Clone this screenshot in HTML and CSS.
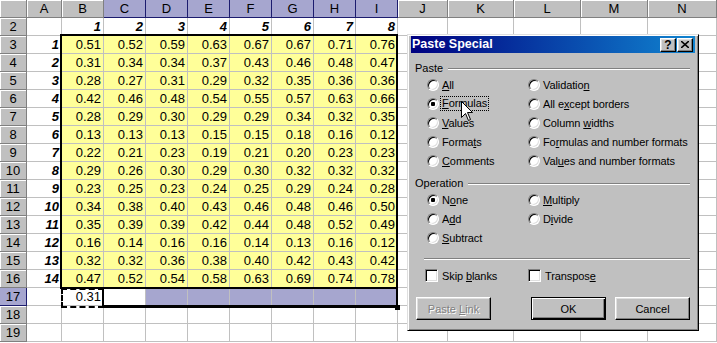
FILE: index.html
```html
<!DOCTYPE html>
<html>
<head>
<meta charset="utf-8">
<link rel="stylesheet" href="styles.css">
</head>
<body>
<div class="sheet">
  <div class="r hd"><span class="h"></span><span class="h">A</span><span class="h">B</span><span class="h s">C</span><span class="h s">D</span><span class="h s">E</span><span class="h s">F</span><span class="h s">G</span><span class="h s">H</span><span class="h s">I</span><span class="h">J</span><span class="h">K</span><span class="h">L</span><span class="h">M</span><span class="h">N</span></div>
  <div class="r"><span class="h">2</span><span></span><span class="bi">1</span><span class="bi">2</span><span class="bi">3</span><span class="bi">4</span><span class="bi">5</span><span class="bi">6</span><span class="bi">7</span><span class="bi">8</span><span></span><span></span><span></span><span></span><span></span></div>
  <div class="r y"><span class="h">3</span><span class="bi">1</span><span>0.51</span><span>0.52</span><span>0.59</span><span>0.63</span><span>0.67</span><span>0.67</span><span>0.71</span><span>0.76</span><span></span><span></span><span></span><span></span><span></span></div>
  <div class="r y"><span class="h">4</span><span class="bi">2</span><span>0.31</span><span>0.34</span><span>0.34</span><span>0.37</span><span>0.43</span><span>0.46</span><span>0.48</span><span>0.47</span><span></span><span></span><span></span><span></span><span></span></div>
  <div class="r y"><span class="h">5</span><span class="bi">3</span><span>0.28</span><span>0.27</span><span>0.31</span><span>0.29</span><span>0.32</span><span>0.35</span><span>0.36</span><span>0.36</span><span></span><span></span><span></span><span></span><span></span></div>
  <div class="r y"><span class="h">6</span><span class="bi">4</span><span>0.42</span><span>0.46</span><span>0.48</span><span>0.54</span><span>0.55</span><span>0.57</span><span>0.63</span><span>0.66</span><span></span><span></span><span></span><span></span><span></span></div>
  <div class="r y"><span class="h">7</span><span class="bi">5</span><span>0.28</span><span>0.29</span><span>0.30</span><span>0.29</span><span>0.29</span><span>0.34</span><span>0.32</span><span>0.35</span><span></span><span></span><span></span><span></span><span></span></div>
  <div class="r y"><span class="h">8</span><span class="bi">6</span><span>0.13</span><span>0.13</span><span>0.13</span><span>0.15</span><span>0.15</span><span>0.18</span><span>0.16</span><span>0.12</span><span></span><span></span><span></span><span></span><span></span></div>
  <div class="r y"><span class="h">9</span><span class="bi">7</span><span>0.22</span><span>0.21</span><span>0.23</span><span>0.19</span><span>0.21</span><span>0.20</span><span>0.23</span><span>0.23</span><span></span><span></span><span></span><span></span><span></span></div>
  <div class="r y"><span class="h">10</span><span class="bi">8</span><span>0.29</span><span>0.26</span><span>0.30</span><span>0.29</span><span>0.30</span><span>0.32</span><span>0.32</span><span>0.32</span><span></span><span></span><span></span><span></span><span></span></div>
  <div class="r y"><span class="h">11</span><span class="bi">9</span><span>0.23</span><span>0.25</span><span>0.23</span><span>0.24</span><span>0.25</span><span>0.29</span><span>0.24</span><span>0.28</span><span></span><span></span><span></span><span></span><span></span></div>
  <div class="r y"><span class="h">12</span><span class="bi">10</span><span>0.34</span><span>0.38</span><span>0.40</span><span>0.43</span><span>0.46</span><span>0.48</span><span>0.46</span><span>0.50</span><span></span><span></span><span></span><span></span><span></span></div>
  <div class="r y"><span class="h">13</span><span class="bi">11</span><span>0.35</span><span>0.39</span><span>0.39</span><span>0.42</span><span>0.44</span><span>0.48</span><span>0.52</span><span>0.49</span><span></span><span></span><span></span><span></span><span></span></div>
  <div class="r y"><span class="h">14</span><span class="bi">12</span><span>0.16</span><span>0.14</span><span>0.16</span><span>0.16</span><span>0.14</span><span>0.13</span><span>0.16</span><span>0.12</span><span></span><span></span><span></span><span></span><span></span></div>
  <div class="r y"><span class="h">15</span><span class="bi">13</span><span>0.32</span><span>0.32</span><span>0.36</span><span>0.38</span><span>0.40</span><span>0.42</span><span>0.43</span><span>0.42</span><span></span><span></span><span></span><span></span><span></span></div>
  <div class="r y"><span class="h">16</span><span class="bi">14</span><span>0.47</span><span>0.52</span><span>0.54</span><span>0.58</span><span>0.63</span><span>0.69</span><span>0.74</span><span>0.78</span><span></span><span></span><span></span><span></span><span></span></div>
  <div class="r"><span class="h s">17</span><span></span><span>0.31</span><span></span><span class="lv"></span><span class="lv"></span><span class="lv"></span><span class="lv"></span><span class="lv"></span><span class="lv"></span><span></span><span></span><span></span><span></span><span></span></div>
  <div class="r"><span class="h">18</span><span></span><span></span><span></span><span></span><span></span><span></span><span></span><span></span><span></span><span></span><span></span><span></span><span></span><span></span></div>
  <div class="r"><span class="h">19</span><span></span><span></span><span></span><span></span><span></span><span></span><span></span><span></span><span></span><span></span><span></span><span></span><span></span><span></span></div>

  <div class="block"></div>
  <div class="ants"></div>
  <div class="selbox"></div>
  <div class="handle"></div>
</div>

<div class="dlg">
  <div class="title">
    <span class="ttext">Paste Special</span>
    <div class="tbtns">
      <span class="tb q">?</span>
      <span class="tb"><svg width="8" height="7" viewBox="0 0 8 7"><path d="M0 0 L8 7 M8 0 L0 7" stroke="#000" stroke-width="1.6" fill="none"/></svg></span>
    </div>
  </div>
  <div class="body">
    <div class="grp"><span>Paste</span><i class="line"></i></div>
    <div class="opts">
      <label class="op"><i class="rd"></i><span><u>A</u>ll</span></label>
      <label class="op"><i class="rd"></i><span>Validatio<u>n</u></span></label>
      <label class="op"><i class="rd on"></i><span class="focus"><u>F</u>ormulas</span></label>
      <label class="op"><i class="rd"></i><span>All e<u>x</u>cept borders</span></label>
      <label class="op"><i class="rd"></i><span><u>V</u>alues</span></label>
      <label class="op"><i class="rd"></i><span>Column <u>w</u>idths</span></label>
      <label class="op"><i class="rd"></i><span>Forma<u>t</u>s</span></label>
      <label class="op"><i class="rd"></i><span>Fo<u>r</u>mulas and number formats</span></label>
      <label class="op"><i class="rd"></i><span><u>C</u>omments</span></label>
      <label class="op"><i class="rd"></i><span>Val<u>u</u>es and number formats</span></label>
    </div>
    <div class="grp g2"><span>Operation</span><i class="line"></i></div>
    <div class="opts">
      <label class="op"><i class="rd on"></i><span>N<u>o</u>ne</span></label>
      <label class="op"><i class="rd"></i><span><u>M</u>ultiply</span></label>
      <label class="op"><i class="rd"></i><span>A<u>d</u>d</span></label>
      <label class="op"><i class="rd"></i><span>D<u>i</u>vide</span></label>
      <label class="op"><i class="rd"></i><span><u>S</u>ubtract</span></label>
    </div>
    <i class="sep"></i>
    <div class="checks">
      <label class="ck"><i class="cb"></i><span>Skip <u>b</u>lanks</span></label>
      <label class="ck"><i class="cb"></i><span>Transpos<u>e</u></span></label>
    </div>
    <div class="btns">
      <span class="btn dis"><span>Paste <u>L</u>ink</span></span>
      <span class="btn def"><span>OK</span></span>
      <span class="btn"><span>Cancel</span></span>
    </div>
  </div>
</div>

<svg class="cursor" width="13" height="20" viewBox="0 0 13 20"><path d="M0.5 0.5 V16.5 L4.5 12.5 L7.5 19.5 L9.5 18.5 L6.5 11.5 H11.5 Z" fill="#fff" stroke="#000" stroke-width="1" stroke-linejoin="miter"/></svg>
</body>
</html>
```

FILE: styles.css
```css
* { box-sizing: border-box; }
html, body { margin: 0; padding: 0; }
body {
  width: 717px;
  height: 343px;
  overflow: hidden;
  background: #fff;
  font-family: "Liberation Sans", Arial, sans-serif;
  position: relative;
  color: #000;
}

.sheet { position: relative; }

.r {
  display: grid;
  grid-template-columns: 27px 35px repeat(8, 42px) 50px 66px 67px 67px 69px;
  height: 18px;
}
.r > span {
  border-right: 1px solid #c0c0c0;
  border-bottom: 1px solid #c0c0c0;
  font-size: 13px;
  line-height: 18px;
  text-align: right;
  padding-right: 2px;
  white-space: nowrap;
  overflow: hidden;
}
.r > .h {
  background: #c0c0c0;
  border-right-color: #808080;
  border-bottom-color: #808080;
  box-shadow: inset 1px 1px #fff;
  text-align: center;
  padding: 0;
  line-height: 17px;
}
.r > .h.s {
  background: #a6a6cf;
  border-right-color: #1c1c6e;
  border-bottom-color: #1c1c6e;
  box-shadow: none;
}
.r > .lv { background: #a6a6cf; }
.bi { font-weight: bold; font-style: italic; }
.y > span:nth-child(n+3):nth-child(-n+10) { background: #ffff99; }

.block {
  position: absolute;
  left: 60px; top: 34px;
  width: 338px; height: 255px;
  border: 2px solid #000;
}
.ants {
  position: absolute;
  left: 61px; top: 288px;
  width: 43px; height: 20px;
  border: 2px dashed #000;
}
.selbox {
  position: absolute;
  left: 102px; top: 287px;
  width: 296px; height: 21px;
  border-style: solid;
  border-color: #000;
  border-width: 2px 2px 3px 2px;
}
.handle {
  position: absolute;
  left: 395px; top: 305px;
  width: 5px; height: 5px;
  background: #000;
}

/* Dialog */
.dlg {
  position: absolute;
  left: 407px; top: 34px;
  width: 292px; height: 297px;
  background: #c0c0c0;
  border: 1px solid;
  border-color: #dfdfdf #000 #000 #dfdfdf;
  box-shadow: inset 1px 1px #fff, inset -1px -1px #808080;
  padding: 1px 3px 3px 3px;
  font-size: 11px;
  display: flex;
  flex-direction: column;
}
.title {
  height: 17px;
  background: linear-gradient(to right, #000080, #1084d0);
  display: flex;
  align-items: center;
  justify-content: space-between;
  padding: 0 2px 0 1px;
}
.ttext {
  color: #fff;
  font-weight: bold;
  font-size: 12.5px;
  line-height: 17px;
}
.tbtns { display: flex; gap: 1px; }
.tb {
  width: 16px; height: 14px;
  background: #c0c0c0;
  border: 1px solid;
  border-color: #fff #000 #000 #fff;
  box-shadow: inset -1px -1px #808080, inset 1px 1px #dfdfdf;
  display: flex;
  align-items: center;
  justify-content: center;
  font-weight: bold;
  font-size: 12px;
  line-height: 12px;
}
.body {
  display: flex;
  flex-direction: column;
  padding: 9px 5px 0 4px;
}
.grp {
  display: flex;
  align-items: center;
  gap: 5px;
  height: 13px;
  line-height: 13px;
}
.g2 { margin-top: 7px; }
.line {
  flex: 1;
  height: 2px;
  border-top: 1px solid #808080;
  border-bottom: 1px solid #fff;
}
.opts {
  display: grid;
  grid-template-columns: 101px 1fr;
  padding-left: 12px;
}
.op, .ck {
  display: flex;
  align-items: center;
  gap: 3px;
  height: 19px;
  white-space: nowrap;
  letter-spacing: -0.1px;
}
.rd {
  width: 12px; height: 12px;
  flex: none;
  border-radius: 50%;
  background: #fff;
  border: 1px solid;
  border-color: #808080 #fff #fff #808080;
  box-shadow: inset 1px 1px #000, inset -1px -1px #dfdfdf;
  position: relative;
}
.rd.on::after {
  content: "";
  position: absolute;
  left: 3px; top: 3px;
  width: 4px; height: 4px;
  background: #000;
  border-radius: 1px;
}
.focus {
  display: inline-block;
  border: 1px dotted #000;
  padding: 0 1px;
  margin: 0 -2px;
  line-height: 13px;
}
.sep {
  display: block;
  height: 2px;
  margin: 11px 0 0 9px;
  border-top: 1px solid #808080;
  border-bottom: 1px solid #fff;
}
.checks {
  display: grid;
  grid-template-columns: 103px 1fr;
  padding-left: 10px;
  margin-top: 6px;
}
.ck { gap: 4px; }
.cb {
  width: 13px; height: 13px;
  flex: none;
  background: #fff;
  border: 1px solid;
  border-color: #808080 #fff #fff #808080;
  box-shadow: inset 1px 1px #000, inset -1px -1px #dfdfdf;
}
.btns {
  display: flex;
  margin-top: 12px;
  padding-left: 1px;
}
.btn {
  width: 75px; height: 23px;
  background: #c0c0c0;
  border: 1px solid;
  border-color: #fff #000 #000 #fff;
  box-shadow: inset -1px -1px #808080, inset 1px 1px #dfdfdf;
  display: flex;
  align-items: center;
  justify-content: center;
}
.btn.def {
  margin-left: 40px;
  border-color: #000;
  box-shadow: inset 1px 1px #fff, inset -1px -1px #000, inset -2px -2px #808080;
}
.btn.def + .btn { margin-left: 9px; }
.btn.dis {
  color: #808080;
  text-shadow: 1px 1px #fff;
}

.cursor {
  position: absolute;
  left: 461px; top: 101px;
}
```
